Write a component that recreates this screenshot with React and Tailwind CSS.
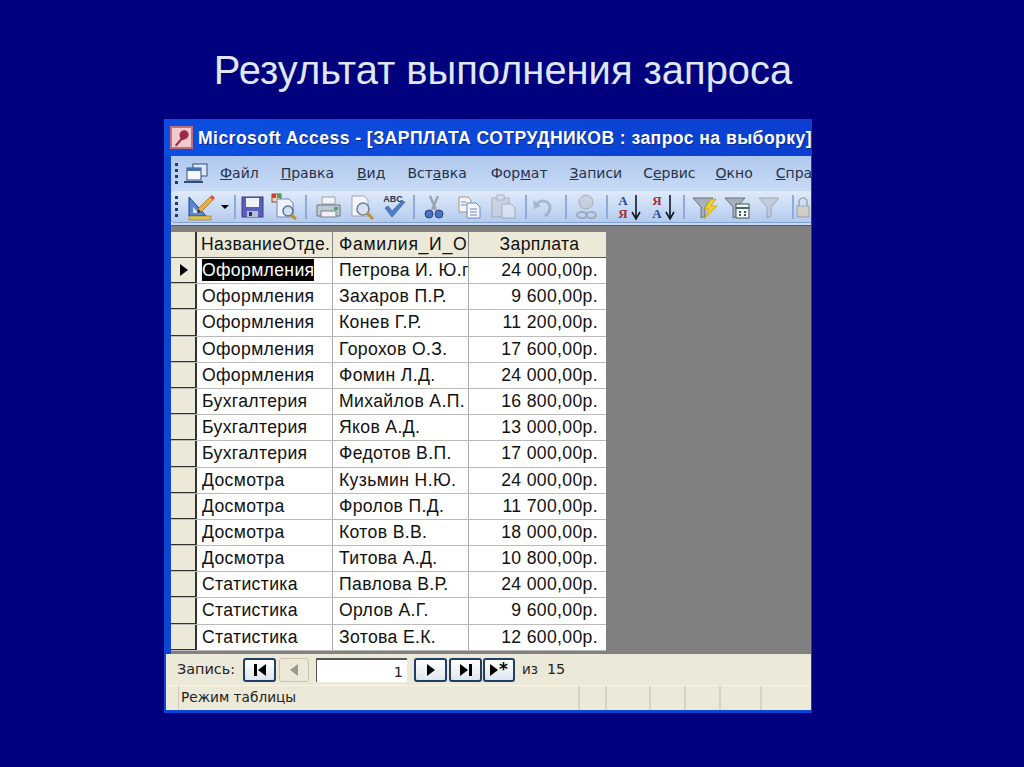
const rows = [
  ["Оформления", "Петрова И. Ю.г", "24 000,00р."],
  ["Оформления", "Захаров П.Р.", "9 600,00р."],
  ["Оформления", "Конев Г.Р.", "11 200,00р."],
  ["Оформления", "Горохов О.З.", "17 600,00р."],
  ["Оформления", "Фомин Л.Д.", "24 000,00р."],
  ["Бухгалтерия", "Михайлов А.П.", "16 800,00р."],
  ["Бухгалтерия", "Яков А.Д.", "13 000,00р."],
  ["Бухгалтерия", "Федотов В.П.", "17 000,00р."],
  ["Досмотра", "Кузьмин Н.Ю.", "24 000,00р."],
  ["Досмотра", "Фролов П.Д.", "11 700,00р."],
  ["Досмотра", "Котов В.В.", "18 000,00р."],
  ["Досмотра", "Титова А.Д.", "10 800,00р."],
  ["Статистика", "Павлова В.Р.", "24 000,00р."],
  ["Статистика", "Орлов А.Г.", "9 600,00р."],
  ["Статистика", "Зотова Е.К.", "12 600,00р."],
];

const Svg = ({ children, className = "" }) => (
  <svg viewBox="0 0 32 32" className={"w-[32px] h-[32px] shrink-0 " + className}>{children}</svg>
);
const Sep = ({ className }) => <div className={"w-[2px] h-[24px] shrink-0 bg-[#8fabd8] " + className} />;

const Grip = () => (
  <div className="flex flex-col gap-[3px] w-[4px] shrink-0">
    {[0, 1, 2, 3].map((i) => <div key={i} className="w-[3px] h-[3px] bg-[#1c3a78]" />)}
  </div>
);

const Design = () => (
  <svg viewBox="0 0 30 30" className="w-[30px] h-[30px] shrink-0">
    <path d="M3 5 L3 24 L20 24 Z" fill="#5a86d8" stroke="#24408c" />
    <path d="M7 15 L7 21 L13 21 Z" fill="#cfe0f8" />
    <rect x="3" y="24" width="22" height="4" fill="#e0c050" stroke="#8a7020" strokeWidth="0.6" />
    <path d="M12 17 L24 5 L27 8 L15 20 Z" fill="#e8b040" stroke="#8a5a10" strokeWidth="0.6" />
    <path d="M12 17 L11 21 L15 20 Z" fill="#303030" />
    <path d="M24 5 L26 3 L29 6 L27 8 Z" fill="#d05050" />
  </svg>
);
const Save = () => (
  <Svg>
    <rect x="6" y="6" width="21" height="20" fill="#5a60b8" stroke="#3a3c88" />
    <rect x="10" y="7" width="13" height="9" fill="#eef2fa" />
    <rect x="11" y="20" width="11" height="6" fill="#b8bcd8" />
    <rect x="13" y="21" width="3" height="4" fill="#2a2c78" />
  </Svg>
);
const QueryDoc = () => (
  <Svg>
    <rect x="4" y="3" width="9" height="8" fill="#e8d8c0" stroke="#b04030" />
    <rect x="4" y="3" width="4" height="4" fill="#d04030" />
    <rect x="9" y="3" width="4" height="4" fill="#50a050" />
    <path d="M9 8 H21 L25 12 V26 H9 Z" fill="#eef2fa" stroke="#7088b8" />
    <circle cx="20" cy="20" r="5" fill="#cfe0f8" stroke="#607090" strokeWidth="1.5" />
    <path d="M23 24 L28 28" stroke="#c09030" strokeWidth="3" />
  </Svg>
);
const Printer = () => (
  <Svg>
    <path d="M10 6 H23 V13 H10 Z" fill="#f2f4f8" stroke="#98a0b0" />
    <path d="M5 14 H28 V25 H5 Z" fill="#c0c8d4" stroke="#6a7480" />
    <rect x="9" y="20" width="15" height="6" fill="#eef0f4" stroke="#788090" />
    <rect x="22" y="16" width="4" height="3" fill="#40b060" />
  </Svg>
);
const Preview = () => (
  <Svg>
    <path d="M7 5 H19 L23 9 V25 H7 Z" fill="#f4f6fa" stroke="#9aa8c0" />
    <circle cx="18" cy="18" r="6" fill="#d4e2f4" stroke="#7a8290" strokeWidth="1.6" />
    <path d="M22 22 L28 28" stroke="#c09030" strokeWidth="3" />
  </Svg>
);
const Spell = () => (
  <Svg>
    <text x="15" y="11" textAnchor="middle" fontSize="9" fontWeight="700" fontFamily="Liberation Sans" fill="#303050">ABC</text>
    <path d="M7 17 L14 26 L27 11 L24 10 L14 20 L10 15 Z" fill="#4f7fd0" stroke="#2a4c90" strokeWidth="0.6" />
  </Svg>
);
const Cut = () => (
  <Svg>
    <path d="M12 5 L18 19 M20 5 L14 19" stroke="#98a4b4" strokeWidth="2.4" />
    <circle cx="11" cy="23" r="4" fill="#4a72c8" stroke="#28407c" />
    <circle cx="21" cy="23" r="4" fill="#4a72c8" stroke="#28407c" />
  </Svg>
);
const Copy = () => (
  <Svg>
    <path d="M6 6 H15 L18 9 V21 H6 Z" fill="#f2f4fa" stroke="#a89a70" />
    <path d="M14 12 H23 L27 16 V27 H14 Z" fill="#f4f6fc" stroke="#6a8ac0" />
    <path d="M17 18 H24 M17 21 H24 M17 24 H24 M8 11 H13 M8 14 H13" stroke="#6a86c0" />
  </Svg>
);
const Paste = () => (
  <Svg className="opacity-60">
    <rect x="5" y="7" width="17" height="19" fill="#c8ccd4" stroke="#8a909c" />
    <rect x="10" y="4" width="7" height="5" fill="#d8dce2" stroke="#8a909c" />
    <path d="M15 13 H24 L28 17 V27 H15 Z" fill="#e4e8f0" stroke="#8a94a8" />
  </Svg>
);
const Undo = () => (
  <Svg className="opacity-50">
    <path d="M9 16 C10 8 22 8 23 16 C23 20 21 23 18 25" fill="none" stroke="#8090a8" strokeWidth="3" />
    <path d="M6 9 L7 18 L14 15 Z" fill="#8090a8" />
  </Svg>
);
const LinkIcon = () => (
  <Svg className="opacity-60">
    <circle cx="16" cy="11" r="7" fill="#c0c6d0" stroke="#8a909c" />
    <ellipse cx="12" cy="24" rx="5" ry="3" fill="none" stroke="#8a909c" strokeWidth="2" />
    <ellipse cx="21" cy="24" rx="5" ry="3" fill="none" stroke="#8a909c" strokeWidth="2" />
  </Svg>
);
const Sort = ({ top, bottom, topColor, bottomColor }) => (
  <Svg>
    <text x="11" y="14" textAnchor="middle" fontSize="13" fontWeight="700" fontFamily="Liberation Serif" fill={topColor}>{top}</text>
    <text x="11" y="27" textAnchor="middle" fontSize="13" fontWeight="700" fontFamily="Liberation Serif" fill={bottomColor}>{bottom}</text>
    <path d="M24 4 V26 M20 21 L24 28 L28 21" fill="none" stroke="#101828" strokeWidth="1.6" />
  </Svg>
);
const Funnel = ({ fill = "#a8b0bc", stroke = "#6a7280" }) => (
  <path d="M4 7 H24 L16 16 V25 L12 27 V16 Z" fill={fill} stroke={stroke} />
);
const FilterSel = () => (
  <Svg>
    <Funnel />
    <path d="M22 8 L15 18 H20 L15 28 L28 15 H22 L27 8 Z" fill="#f0d030" stroke="#b09010" strokeWidth="0.6" />
  </Svg>
);
const FilterForm = () => (
  <Svg>
    <Funnel />
    <rect x="15" y="13" width="13" height="14" fill="#f4f6fa" stroke="#3a5a50" />
    <path d="M15 17 H28" stroke="#4a6a60" strokeWidth="2" />
    <path d="M18 21 H20 M23 21 H25 M18 24 H20 M23 24 H25" stroke="#3a5a50" strokeWidth="2" />
  </Svg>
);
const FilterOff = () => <Svg className="opacity-75"><Funnel fill="#c0c8d4" stroke="#8a94a4" /></Svg>;
const Lock = () => (
  <svg viewBox="0 0 14 32" className="w-[14px] h-[32px] shrink-0 opacity-70">
    <path d="M3 15 V11 A4 4 0 0 1 11 11 V15" fill="none" stroke="#8a909c" strokeWidth="1.6" />
    <rect x="1" y="15" width="12" height="11" fill="#d8ccb0" stroke="#8a909c" />
  </svg>
);

const MenuItem = ({ pre = "", u, post = "", className }) => (
  <span className={"shrink-0 " + className}>
    {pre}<span className="underline">{u}</span>{post}
  </span>
);

const navBtn = "h-[24px] rounded-[3px] border-2 border-[#1f3f68] bg-gradient-to-b from-white to-[#dfe6ee] flex items-center justify-center shrink-0";
const Tri = ({ left, className = "" }) => (
  <span className={"w-0 h-0 border-y-[6px] border-y-transparent " + (left ? "border-r-[8px] border-r-black " : "border-l-[8px] border-l-black ") + className} />
);
const Bar = () => <span className="w-[3px] h-[12px] bg-black" />;

export default function App() {
  return (
    <div className="w-[1024px] h-[767px] overflow-hidden bg-[#00007f] font-['Liberation_Sans',sans-serif]">
      <div className="h-[119px] flex justify-center pt-[44px]">
        <h1 className="text-[#dfe6f4] text-[39.9px] leading-[52px] h-[52px] font-normal -ml-[18px] whitespace-nowrap">
          Результат выполнения запроса
        </h1>
      </div>

      <div className="ml-[164px] w-[648px] h-[594px] bg-[#0b45d2] flex flex-col overflow-hidden">
        {/* title bar */}
        <div className="h-[37px] shrink-0 pl-[6px] flex items-center bg-gradient-to-r from-[#0c4fe0] to-[#0a3fd0] overflow-hidden">
          <svg viewBox="0 0 24 24" className="w-[23px] h-[23px] shrink-0 mr-[5px]">
            <rect x="0" y="0" width="24" height="24" fill="#c06a78" />
            <rect x="2" y="2" width="20" height="20" fill="#f0c8d0" />
            <path d="M5 20 L11 13 C8 8 12 3 17 5 C21 7 20 13 15 14 L12 15 L7 21 Z" fill="#9a2a40" />
          </svg>
          <span className="text-white font-bold text-[17.6px] leading-[24px] whitespace-nowrap [text-shadow:1px_1px_0_#0a2a90] tracking-[0.43px]">
            Microsoft Access - [ЗАРПЛАТА СОТРУДНИКОВ : запрос на выборку]
          </span>
        </div>

        {/* menu bar */}
        <div className="h-[35px] shrink-0 ml-[7px] w-[640px] bg-gradient-to-b from-[#b0c8ee] to-[#c8dbf6] flex items-center pl-[4px] overflow-hidden text-[#26324a] text-[14px] font-['DejaVu_Sans',sans-serif] whitespace-nowrap">
          <Grip />
          <svg viewBox="0 0 26 24" className="w-[26px] h-[24px] shrink-0 ml-[4px]">
            <rect x="10" y="2" width="14" height="12" fill="#dfe8f6" stroke="#30507c" />
            <rect x="4" y="6" width="14" height="12" fill="#f4f7fc" stroke="#30507c" />
            <rect x="4" y="6" width="14" height="3" fill="#4a70b0" />
            <path d="M1 20 H20" stroke="#30507c" strokeWidth="2" />
          </svg>
          <MenuItem u="Ф" post="айл" className="ml-[11px]" />
          <MenuItem u="П" post="равка" className="ml-[22px]" />
          <MenuItem u="В" post="ид" className="ml-[23px]" />
          <MenuItem pre="Вст" u="а" post="вка" className="ml-[22px]" />
          <MenuItem pre="Фор" u="м" post="ат" className="ml-[24px]" />
          <MenuItem u="З" post="аписи" className="ml-[22px]" />
          <MenuItem pre="С" u="е" post="рвис" className="ml-[21px]" />
          <MenuItem u="О" post="кно" className="ml-[20px]" />
          <MenuItem u="С" post="правка" className="ml-[23px]" />
        </div>

        {/* toolbar */}
        <div className="h-[34px] shrink-0 ml-[7px] w-[640px] bg-[#c8dbf6]">
          <div className="h-[32px] bg-gradient-to-b from-[#e0ebfb] to-[#b4cbed] rounded-l-[4px] flex items-center pl-[4px] overflow-hidden border-b border-[#7f9fd0]">
            <Grip />
            <div className="ml-[7px]"><Design /></div>
            <span className="w-0 h-0 ml-[5px] border-x-[4px] border-x-transparent border-t-[4px] border-t-black shrink-0" />
            <Sep className="ml-[5px]" />
            <Save />
            <QueryDoc />
            <Sep className="ml-[5px]" />
            <div className="ml-[5px]"><Printer /></div>
            <div className="ml-[1px]"><Preview /></div>
            <div className="ml-[1px]"><Spell /></div>
            <Sep className="ml-[3px]" />
            <div className="ml-[3px]"><Cut /></div>
            <div className="ml-[3px]"><Copy /></div>
            <div className="ml-[2px]"><Paste /></div>
            <Sep className="ml-[6px]" />
            <Undo />
            <Sep className="ml-[6px]" />
            <div className="ml-[3px]"><LinkIcon /></div>
            <Sep className="ml-[4px]" />
            <div className="ml-[4px]"><Sort top="А" bottom="Я" topColor="#2a4c90" bottomColor="#a03040" /></div>
            <div className="ml-[2px]"><Sort top="Я" bottom="А" topColor="#a03040" bottomColor="#2a4c90" /></div>
            <Sep className="ml-[5px]" />
            <div className="ml-[4px]"><FilterSel /></div>
            <FilterForm />
            <div className="ml-[2px]"><FilterOff /></div>
            <Sep className="ml-[5px]" />
            <div className="ml-[2px]"><Lock /></div>
          </div>
        </div>

        {/* datasheet */}
        <div className="h-[429px] shrink-0 ml-[7px] w-[640px] bg-[#808080] flex pt-[6px] border-t border-[#5a5a5a] overflow-hidden">
          <div className="w-[435px] shrink-0 overflow-hidden text-[17.6px] text-[#111] tracking-[0.35px]">
            <div className="flex h-[26px] bg-[#ece9d8] border-b border-[#555]">
              <div className="w-[26px] shrink-0 border-r-2 border-[#333]" />
              <div className="w-[136px] shrink-0 pl-[4px] border-r border-[#888] leading-[25px] overflow-hidden whitespace-nowrap">НазваниеОтде.</div>
              <div className="w-[136px] shrink-0 pl-[6px] border-r border-[#888] leading-[25px] overflow-hidden whitespace-nowrap tracking-[0.7px]">Фамилия_И_О</div>
              <div className="w-[137px] shrink-0 text-center pl-[4px] leading-[25px]">Зарплата</div>
            </div>
            {rows.map((r, i) => (
              <div key={i} className="flex h-[26.2px] bg-white border-b border-[#bbb]">
                <div className="w-[26px] shrink-0 bg-[#ece9d8] border-r-2 border-b border-[#333] flex items-center pl-[9px]">
                  {i === 0 && <Tri />}
                </div>
                <div className="w-[136px] shrink-0 pl-[5px] border-r border-[#aaa] leading-[25.5px] overflow-hidden whitespace-nowrap">
                  {i === 0 ? <span className="bg-black text-white inline-block leading-[22px]">{r[0]}</span> : r[0]}
                </div>
                <div className="w-[136px] shrink-0 pl-[6px] border-r border-[#aaa] leading-[25.5px] overflow-hidden whitespace-nowrap">{r[1]}</div>
                <div className="w-[137px] shrink-0 text-right pr-[8px] leading-[25.5px] whitespace-nowrap">{r[2]}</div>
              </div>
            ))}
          </div>
        </div>

        {/* navigation */}
        <div className="h-[31px] shrink-0 ml-[2px] w-[645px] bg-[#ece9d8] flex items-center pl-[11px] text-[14.4px] text-[#222] font-['DejaVu_Sans',sans-serif] whitespace-nowrap">
          <span className="w-[66px] shrink-0">Запись:</span>
          <div className={navBtn + " w-[33px] gap-[1px]"}><Bar /><Tri left /></div>
          <div className="h-[24px] w-[30px] ml-[3px] rounded-[3px] border border-[#c8c4b0] flex items-center justify-center shrink-0">
            <span className="w-0 h-0 border-y-[6px] border-y-transparent border-r-[8px] border-r-[#9a9a90]" />
          </div>
          <div className="h-[24px] w-[91px] ml-[7px] bg-white border-t-2 border-l border-[#555] text-right pr-[4px] leading-[24px] shrink-0">1</div>
          <div className={navBtn + " w-[33px] ml-[7px]"}><Tri /></div>
          <div className={navBtn + " w-[33px] ml-[2px] gap-[1px]"}><Tri /><Bar /></div>
          <div className={navBtn + " w-[32px] ml-[1px] gap-[1px]"}><Tri /><span className="text-[17px] leading-none font-bold text-black">*</span></div>
          <span className="ml-[7px] text-[13.5px]">из</span>
          <span className="ml-[9px] text-[14.4px]">15</span>
        </div>

        {/* status */}
        <div className="h-[25px] shrink-0 ml-[2px] w-[645px] bg-[#ece9d8] border-t border-[#f6f4ea] flex text-[13.7px] text-[#222] font-['DejaVu_Sans',sans-serif]">
          <div className="w-[13px] shrink-0 border-r border-[#cfcbb8]" />
          <div className="w-[401px] shrink-0 border-r-2 border-[#d8d4c2] pl-[2px] leading-[23px]">Режим таблицы</div>
          <div className="w-[27px] shrink-0 border-r-2 border-[#d8d4c2]" />
          <div className="w-[44px] shrink-0 border-r-2 border-[#d8d4c2]" />
          <div className="w-[35px] shrink-0 border-r-2 border-[#d8d4c2]" />
          <div className="w-[35px] shrink-0 border-r-2 border-[#d8d4c2]" />
          <div className="w-[41px] shrink-0 border-r-2 border-[#d8d4c2]" />
          <div className="flex-1" />
        </div>
      </div>
    </div>
  );
}
